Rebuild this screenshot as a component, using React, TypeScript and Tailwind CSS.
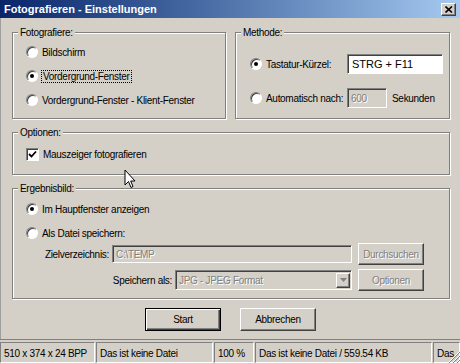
const raised =
  "border border-t-white border-l-white border-r-[#404040] border-b-[#404040] shadow-[inset_-1px_-1px_0_#808080]";
const sunken =
  "border border-t-[#808080] border-l-[#808080] border-r-white border-b-white shadow-[inset_1px_1px_0_#404040]";
const etched = "border border-[#808080] shadow-[inset_1px_1px_0_#fff,1px_1px_0_#fff]";
const disabledText = "text-[#808080] [text-shadow:1px_1px_0_#fff]";

const Radio = ({ checked }: { checked?: boolean }) => (
  <span className="w-3 h-3 shrink-0 rounded-full flex items-center justify-center bg-white border border-t-[#808080] border-l-[#808080] border-r-white border-b-white shadow-[inset_1px_1px_0_#404040]">
    {checked && <span className="w-1 h-1 rounded-full bg-black" />}
  </span>
);

const Group = ({
  title,
  className,
  children,
}: {
  title: string;
  className: string;
  children: React.ReactNode;
}) => (
  <fieldset className={`${etched} m-0 p-0 ${className}`}>
    <legend className="ml-[5px] px-[2px] leading-[13px] bg-[#d4d0c8]">{title}</legend>
    {children}
  </fieldset>
);

const StatusPanel = ({ w, children }: { w: string; children: React.ReactNode }) => (
  <div
    className={`${w} h-[21px] flex items-center pt-[2px] px-[3px] whitespace-nowrap overflow-hidden border border-t-[#808080] border-l-[#808080] border-r-white border-b-white`}
  >
    {children}
  </div>
);

export default function App() {
  return (
    <div className="w-[460px] h-[363px] overflow-hidden bg-[#d4d0c8] text-black text-[10px] tracking-[-0.3px] font-['Liberation_Sans',Arial,sans-serif] select-none">
      {/* title bar */}
      <div className="h-[18px] flex items-center justify-between pl-[4px] pr-[4px] bg-gradient-to-r from-[#0a246a] to-[#a6caf0]">
        <span className="text-white font-bold text-[11px] tracking-normal">
          Fotografieren - Einstellungen
        </span>
        <span className={`${raised} w-[15px] h-[13px] bg-[#d4d0c8] flex items-center justify-center`}>
          <svg width="8" height="7" viewBox="0 0 8 7">
            <path d="M0.5 0.5 L7 6.5 M7 0.5 L0.5 6.5" stroke="#000" strokeWidth="1.6" />
          </svg>
        </span>
      </div>

      {/* body */}
      <div className="relative h-[321px] pt-[8px] pl-[11px] border-l border-[#a0a0a0]">
        <div className="flex gap-[9px]">
          <Group title="Fotografiere:" className="w-[214px] h-[93px]">
            <div className="flex flex-col gap-[10px] pt-[6px] pl-[13px]">
              <label className="flex items-center gap-[4px] h-[14px]">
                <Radio />
                Bildschirm
              </label>
              <label className="flex items-center gap-[3px] h-[14px]">
                <Radio checked />
                <span className="border border-dotted border-black px-[1px] leading-[11px]">
                  Vordergrund-Fenster
                </span>
              </label>
              <label className="flex items-center gap-[4px] h-[14px]">
                <Radio />
                Vordergrund-Fenster - Klient-Fenster
              </label>
            </div>
          </Group>

          <Group title="Methode:" className="w-[215px] h-[93px]">
            <div className="flex flex-col gap-[14px] pt-[15px] pl-[14px]">
              <div className="flex items-center h-[20px]">
                <label className="w-[97px] flex items-center gap-[4px]">
                  <Radio checked />
                  Tastatur-Kürzel:
                </label>
                <div className={`${sunken} w-[96px] h-[20px] bg-white flex items-center px-[4px] text-[11px] tracking-normal`}>
                  STRG + F11
                </div>
              </div>
              <div className="flex items-center h-[20px]">
                <label className="w-[97px] flex items-center gap-[4px]">
                  <Radio />
                  Automatisch nach:
                </label>
                <div className={`${sunken} ${disabledText} w-[40px] h-[20px] flex items-center px-[3px]`}>
                  600
                </div>
                <span className="ml-[5px]">Sekunden</span>
              </div>
            </div>
          </Group>
        </div>

        <Group title="Optionen:" className="w-[438px] h-[49px] mt-[7px]">
          <div className="pt-[8px] pl-[13px]">
            <label className="flex items-center gap-[4px] h-[14px]">
              <span className={`${sunken} w-[13px] h-[13px] bg-white flex items-center justify-center`}>
                <svg width="9" height="9" viewBox="0 0 9 9">
                  <path d="M1 4 L3.5 6.5 L8 1.5" stroke="#000" strokeWidth="1.8" fill="none" />
                </svg>
              </span>
              Mauszeiger fotografieren
            </label>
          </div>
        </Group>

        <Group title="Ergebnisbild:" className="w-[438px] h-[117px] mt-[7px]">
          <div className="flex flex-col pt-[7px] pl-[13px]">
            <label className="flex items-center gap-[4px] h-[14px]">
              <Radio checked />
              Im Hauptfenster anzeigen
            </label>
            <label className="flex items-center gap-[4px] h-[14px] mt-[10px]">
              <Radio />
              Als Datei speichern:
            </label>
            <div className="flex items-center h-[22px] mt-[3px] -ml-[13px]">
              <span className="w-[96px] text-right">Zielverzeichnis:</span>
              <div className={`${sunken} ${disabledText} ml-[3px] w-[240px] h-[18px] flex items-center px-[3px]`}>
                C:\TEMP
              </div>
              <button className={`${raised} ${disabledText} ml-[6px] w-[66px] h-[22px] bg-[#d4d0c8]`}>
                Durchsuchen
              </button>
            </div>
            <div className="flex items-center h-[22px] mt-[4px] -ml-[13px]">
              <span className="w-[159px] text-right">Speichern als:</span>
              <div className={`${sunken} ml-[3px] w-[177px] h-[20px] flex items-center justify-between pl-[3px] pr-[1px]`}>
                <span className={disabledText}>JPG - JPEG Format</span>
                <span className={`${raised} w-[14px] h-[15px] bg-[#d4d0c8] flex items-center justify-center`}>
                  <svg width="7" height="4" viewBox="0 0 7 4">
                    <path d="M0 0 H7 L3.5 4 Z" fill="#808080" />
                  </svg>
                </span>
              </div>
              <button className={`${raised} ${disabledText} ml-[6px] w-[66px] h-[22px] bg-[#d4d0c8]`}>
                Optionen
              </button>
            </div>
          </div>
        </Group>

        <div className="flex justify-center gap-[19px] mt-[9px] pr-[11px]">
          <button className="w-[76px] h-[23px] bg-[#d4d0c8] border border-black shadow-[inset_1px_1px_0_#fff,inset_-1px_-1px_0_#404040,inset_-2px_-2px_0_#808080]">
            Start
          </button>
          <button className={`${raised} w-[76px] h-[23px] bg-[#d4d0c8]`}>Abbrechen</button>
        </div>

        {/* mouse pointer */}
        <svg className="absolute left-[123px] top-[151px]" width="13" height="20" viewBox="0 0 13 20">
          <path
            d="M1 1 L1 16 L4.5 12.5 L7 18.5 L9 17.5 L6.7 12 L11 12 Z"
            fill="#fff"
            stroke="#000"
            strokeWidth="1"
            strokeLinejoin="miter"
          />
        </svg>
      </div>

      {/* status bar */}
      <div className="h-[24px] border-t border-[#808080] pt-[2px] flex gap-[1px]">
        <StatusPanel w="w-[95px]">510 x 374 x 24 BPP</StatusPanel>
        <StatusPanel w="w-[117px]">Das ist keine Datei</StatusPanel>
        <StatusPanel w="w-[40px]">100 %</StatusPanel>
        <StatusPanel w="w-[177px]">Das ist keine Datei / 559.54 KB</StatusPanel>
        <div className="relative flex-1">
          <StatusPanel w="w-full">Das</StatusPanel>
          <svg className="absolute right-0 bottom-0" width="12" height="12" viewBox="0 0 12 12">
            <path d="M11 1 L1 11 M11 5 L5 11 M11 9 L9 11" stroke="#fff" strokeWidth="1" />
            <path d="M12 1 L1 12 M12 5 L5 12 M12 9 L9 12" stroke="#808080" strokeWidth="1" />
          </svg>
        </div>
      </div>
    </div>
  );
}
